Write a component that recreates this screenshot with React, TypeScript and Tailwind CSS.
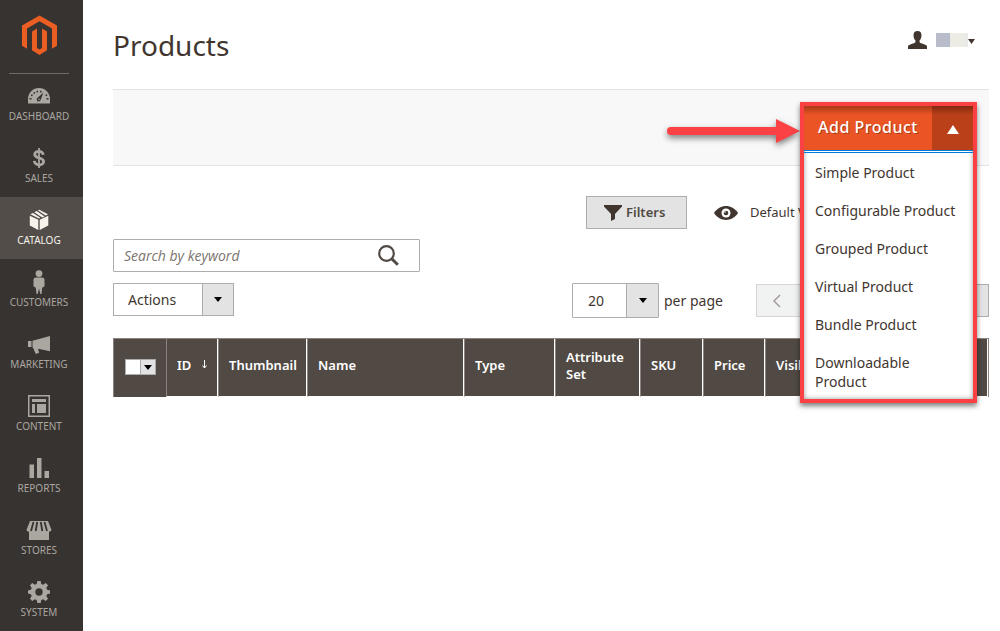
import type { ReactNode } from 'react';

type NavItem = { label: string; icon: ReactNode; active?: boolean };

const navItems: NavItem[] = [
  {
    label: 'DASHBOARD',
    icon: (
      <svg width="24" height="24" viewBox="0 0 24 24" fill="currentColor">
        <path d="M1 19.500V15a11 11 0 0 1 22 0v4.500z" />
        <g fill="#373330">
          <path d="M16.500 8.500 13.600 16a2 2 0 1 1-3.300-2z" />
          <rect x="2.500" y="14" width="2" height="1.500" />
          <rect x="4" y="10.500" width="1.600" height="1.600" />
          <rect x="6.500" y="8.200" width="1.600" height="1.600" />
          <rect x="9.500" y="6.800" width="1.600" height="1.600" />
          <rect x="13" y="6.800" width="1.600" height="1.600" />
          <rect x="18.600" y="10.500" width="1.600" height="1.600" />
          <rect x="19.500" y="14" width="2" height="1.500" />
        </g>
        <circle cx="12" cy="15.200" r="0.800" />
      </svg>
    ),
  },
  {
    label: 'SALES',
    icon: (
      <svg width="24" height="24" viewBox="0 0 24 24" fill="none" stroke="currentColor" strokeWidth="2.800">
        <path d="M16.300 8.800C15.800 6.600 14.200 5.300 12 5.300c-2.400 0-4.300 1.300-4.300 3.300 0 4.500 8.900 2.300 8.900 6.800 0 2-2 3.400-4.500 3.400-2.700 0-4.400-1.400-4.800-3.900" />
        <path strokeWidth="1.800" d="M12 2v20" />
      </svg>
    ),
  },
  {
    label: 'CATALOG',
    active: true,
    icon: (
      <svg width="24" height="24" viewBox="0 0 24 24" fill="currentColor">
        <path d="M2.800 7.800 11.300 11.800v10.200L2.800 17.600zM21.300 7.800 12.700 11.800v10.200l8.600-4.400z" />
        <path d="m7.300 4.200 2.300-1.100 5.200 3.500 2.800 1.900-2.300 1.100zM11 2.400l1.200-.6L21 6.300l-2.300 1.300zM3.300 6.300 6 4.900l7.400 4.900-1.400.8z" />
      </svg>
    ),
  },
  {
    label: 'CUSTOMERS',
    icon: (
      <svg width="24" height="26" viewBox="0 0 24 26" fill="currentColor">
        <circle cx="12" cy="4.600" r="3.400" />
        <path d="M9 8.500h6c1.800 0 2.500 1 2.500 2.800v6.200l-1.500.5-.8 1-.7 6h-1.200L12 19.500 10.700 25H9.500l-.7-6-.8-1-1.500-.5v-6.200C6.500 9.500 7.200 8.500 9 8.500z" />
      </svg>
    ),
  },
  {
    label: 'MARKETING',
    icon: (
      <svg width="24" height="24" viewBox="0 0 24 24" fill="currentColor">
        <path d="M1 9h3.500v6H1zM5.500 8.700 23 4v15.300L11 16.800l1.100 4-3.300 1.200-2.600-6-.7-.5z" />
      </svg>
    ),
  },
  {
    label: 'CONTENT',
    icon: (
      <svg width="24" height="24" viewBox="0 0 24 24" fill="currentColor">
        <path fillRule="evenodd" d="M1 1h22v22H1zM2.500 2.500v19h19v-19z" />
        <path d="M5 5h14v3H5zM5 10h3v9H5zM10 10h9v9h-9z" />
      </svg>
    ),
  },
  {
    label: 'REPORTS',
    icon: (
      <svg width="24" height="24" viewBox="0 0 24 24" fill="currentColor">
        <path d="M2.500 8.500H7V22H2.500zM10 2h4.500v20H10zM17.500 15H22v7h-4.500z" />
      </svg>
    ),
  },
  {
    label: 'STORES',
    icon: (
      <svg width="26" height="24" viewBox="0 0 26 24" fill="currentColor">
        <path d="M4 3h18l3.500 9c-.4 1.200-1.300 1.700-2.500 1.700V22H3v-8.300c-1.200 0-2.100-.5-2.500-1.700z" />
        <path fill="none" stroke="#373330" strokeWidth="1.800" d="M7.500 4 5 13M11.200 4 9.700 13M14.800 4l1.500 9M18.500 4 21 13" />
      </svg>
    ),
  },
  {
    label: 'SYSTEM',
    icon: (
      <svg width="24" height="24" viewBox="0 0 24 24" fill="currentColor">
        <path
          fillRule="evenodd"
          d="M10.400 1h3.200l.7 3 1.800.8 2.700-1.700 2.200 2.200-1.700 2.700.8 1.800 2.900.6v3.200l-2.900.7-.8 1.800 1.700 2.700-2.200 2.200-2.700-1.700-1.800.8-.7 2.900h-3.200l-.7-2.900-1.800-.8L5.200 21 3 18.800l1.700-2.700-.8-1.800-2.900-.7v-3.200l2.900-.6.8-1.800L3 5.300l2.200-2.200 2.700 1.700 1.800-.8zM12 8.300a3.700 3.700 0 1 0 0 7.400 3.700 3.700 0 0 0 0-7.400z"
        />
      </svg>
    ),
  },
];

const productTypes = [
  'Simple Product',
  'Configurable Product',
  'Grouped Product',
  'Virtual Product',
  'Bundle Product',
  'Downloadable Product',
];

const columns = [
  { label: 'Thumbnail', width: 'w-[89px]' },
  { label: 'Name', width: 'w-[157px]' },
  { label: 'Type', width: 'w-[91px]' },
  { label: 'Attribute Set', width: 'w-[85px]' },
  { label: 'SKU', width: 'w-[63px]' },
  { label: 'Price', width: 'w-[62px]' },
  { label: 'Visibility', width: '' },
];

function Caret() {
  return (
    <svg width="8" height="5" viewBox="0 0 8 5" fill="#000" aria-hidden="true">
      <path d="M0 0h8L4 5z" />
    </svg>
  );
}

function Sidebar() {
  return (
    <aside className="flex w-[83px] shrink-0 flex-col bg-[#373330]">
      <a href="#home" aria-label="Magento" className="ml-[9px] flex h-[74px] w-[60px] justify-center border-b border-[#736963] pt-[15px]">
        <svg width="35" height="41" viewBox="0 0 35 40" fill="#eb5e23">
          <path d="M17.500 0 35 10.100v20.200l-5 2.900V13L17.500 5.800 5 13v20.200l-5-2.900V10.100z" />
          <path d="m15 13-5 2.900v18.800l7.500 4.800 7.500-4.800V15.900L20 13v19.500l-2.500 1.400-2.500-1.400z" />
        </svg>
      </a>
      <nav aria-label="Main" className="-mt-px">
        {navItems.map(({ label, icon, active }) => (
          <a
            key={label}
            href={`#${label.toLowerCase()}`}
            className={
              'flex h-[62px] flex-col items-center pr-[5px] text-[10px] leading-[14px] ' +
              (active ? 'bg-[#524d49] text-[#f7f3eb]' : 'text-[#aaa6a0]')
            }
          >
            <span className="mt-[9px] flex h-[27px] items-center justify-center">
              <span className="flex h-6 items-center">{icon}</span>
            </span>
            {label}
          </a>
        ))}
      </nav>
    </aside>
  );
}

function AddProductMenu() {
  return (
    <div className="absolute top-3 right-3 z-10 w-[177px] border-4 border-[#fc4145] bg-white shadow-[0_3px_5px_rgba(0,0,0,0.5),inset_0_0_5px_rgba(0,0,0,0.4)]">
      <div className="flex h-[47px] border-b-[3px] border-double border-[#007bdb]">
        <button type="button" className="flex-1 bg-linear-to-b from-[#a93c18] via-[#eb5424] via-20% to-[#eb5424] pb-[2px] text-[16px] font-medium tracking-[0.5px] whitespace-nowrap text-white [text-shadow:1px_1px_0_rgba(0,0,0,0.3)]">
          Add Product
        </button>
        <button type="button" aria-label="Toggle product types" aria-expanded="true" className="flex w-[41px] items-center justify-center bg-linear-to-b from-[#84290f] via-[#ba4019] via-20% to-[#ba4019]">
          <svg width="12" height="9" viewBox="0 0 12 9" fill="#fff" className="mt-[2px]">
            <path d="M6 0 12 9H0z" />
          </svg>
        </button>
      </div>
      <ul className="flex flex-col gap-[19px] px-[11px] pt-[10px] pb-[8px] text-[14px] leading-[19px] text-[#41362f]">
        {productTypes.map((type) => (
          <li key={type}>
            <a href="#new" className="block">{type}</a>
          </li>
        ))}
      </ul>
    </div>
  );
}

function Toolbar() {
  return (
    <div className="relative h-[77px] border-y border-[#e3e3e3] bg-[#f8f8f8]">
      <svg width="142" height="40" viewBox="0 0 142 40" className="absolute top-[22px] right-[185px] z-10" aria-hidden="true">
        <g fill="#fc4145" className="drop-shadow-[0_3px_3px_rgba(0,0,0,0.5)]">
          <rect x="5" y="15" width="114" height="8" rx="4" />
          <path d="M114 7 138 19 114 31z" />
        </g>
      </svg>
      <AddProductMenu />
    </div>
  );
}

function ProductGrid() {
  return (
    <table className="w-full table-fixed border-separate border-spacing-0 border-t border-r border-[#8a837f] text-left text-[13px] leading-[17px] text-white">
      <thead>
        <tr className="h-[58px]">
          <th className="w-[53px] border-l border-[#8a837f] bg-[#514943] pb-[2px] pl-[11px]">
            <div className="flex h-4 w-[31px] border border-[#adadad] bg-white">
              <input type="checkbox" aria-label="Select all" className="w-[14px] appearance-none bg-white" />
              <button type="button" aria-label="Selection options" className="flex flex-1 items-center justify-center border-l border-[#adadad] bg-[#e3e3e3]">
                <Caret />
              </button>
            </div>
          </th>
          <th className="w-[52px] border-r border-b border-l border-r-white border-b-white border-l-[#8a837f] bg-[#514943] pb-[4px] pl-[10px] font-semibold">
            <span className="flex justify-between pr-[9px]">
              ID
              <svg width="7" height="10" viewBox="0 0 7 10" fill="none" stroke="#fff" className="mt-[3px]" aria-label="descending">
                <path d="M3.500 0v8M1.500 5.500l2 2.500 2-2.500" />
              </svg>
            </span>
          </th>
          {columns.map(({ label, width }) => (
            <th key={label} className={`${width} border-r border-b border-l border-r-white border-b-white border-l-[#8a837f] bg-[#514943] pb-[4px] pl-[10px] font-semibold`}>
              {label}
            </th>
          ))}
        </tr>
      </thead>
    </table>
  );
}

export default function App() {
  return (
    <div className="flex min-h-screen bg-white font-['Noto_Sans','Open_Sans',sans-serif] text-[14px] text-[#41362f]">
      <Sidebar />
      <main className="min-w-0 flex-1 pr-[11px] pl-[30px]">
        <header className="flex h-[89px] items-start justify-between pr-[14px]">
          <h1 className="pt-[25px] text-[28px] leading-[40px]">Products</h1>
          <button type="button" aria-label="Account" className="mt-[31px] flex h-[18px] items-center">
            <svg width="19" height="18" viewBox="0 0 19 18" fill="#41362f" className="mr-[9px]">
              <path d="M9.500 0c2.700 0 4 1.600 4 4.200 0 2.300-.7 4-1.900 5.100v1.900c.8 1.300 6.900 2 7.400 3.800V18H0v-3c.5-1.800 6.600-2.500 7.400-3.800V9.300C6.200 8.200 5.500 6.500 5.500 4.200 5.500 1.600 6.800 0 9.500 0z" />
            </svg>
            <span className="h-[14px] w-[14px] bg-[#b8bccb]" />
            <span className="h-[14px] w-[14px] bg-[#ecece4]" />
            <span className="h-[14px] w-1 bg-[#e9e9e9]" />
            <svg width="7" height="5" viewBox="0 0 7 5" fill="#41362f" className="mt-[2px]">
              <path d="M0 0h7L3.500 5z" />
            </svg>
          </button>
        </header>
        <Toolbar />
        <div className="mt-[30px] flex h-[33px] items-center pl-[473px]">
          <button type="button" className="flex h-[33px] w-[101px] shrink-0 items-center border border-[#adadad] bg-[#e3e3e3] pl-[17px] text-[13px] font-semibold text-[#514943]">
            <svg width="18" height="16" viewBox="0 0 18 16" fill="#41362f" className="mr-1">
              <path d="M0 0h18v1.500L11 9v5l-4 2V9L0 1.500z" />
            </svg>
            Filters
          </button>
          <button type="button" className="ml-[27px] flex shrink-0 items-center text-[13px]">
            <svg width="24" height="14" viewBox="0 0 24 14" className="mr-3">
              <path fill="#41362f" d="M0 7C6-2.300 18-2.300 24 7 18 16.300 6 16.300 0 7z" />
              <circle cx="12" cy="7" r="4.500" fill="#fff" />
              <circle cx="12" cy="7" r="2.300" fill="#41362f" />
              <circle cx="11" cy="6" r="0.800" fill="#fff" />
            </svg>
            Default View
          </button>
        </div>
        <div className="mt-[10px] flex h-[33px] w-[307px] items-center rounded-[1px] border border-[#adadad] pr-[20px] pl-[10px]">
          <input aria-label="Search by keyword" placeholder="Search by keyword" className="min-w-0 flex-1 font-['Open_Sans','Noto_Sans',sans-serif] text-[14px] italic outline-none placeholder:text-[#7b746f]" />
          <button type="button" aria-label="Search">
            <svg width="21" height="21" viewBox="0 0 21 21" fill="none" stroke="#514943">
              <circle cx="8.500" cy="8.500" r="7.300" strokeWidth="2.200" />
              <path strokeWidth="3" d="m13.500 13.500 6.300 6.300" />
            </svg>
          </button>
        </div>
        <div className="mt-[11px] flex items-start">
          <button type="button" className="flex h-[33px] w-[121px] shrink-0 border border-[#adadad]">
            <span className="flex h-full flex-1 items-center pl-[14px]">Actions</span>
            <span className="flex h-full w-[31px] items-center justify-center border-l border-[#adadad] bg-[#e3e3e3]">
              <Caret />
            </span>
          </button>
          <div className="ml-[338px] flex h-[35px] min-w-0 flex-1 items-center">
            <label className="flex shrink-0 items-center">
              <span className="relative flex h-[35px] w-[87px] items-center rounded-[1px] border border-[#adadad]">
                <select className="h-full flex-1 appearance-none pl-[15px] outline-none" defaultValue="20">
                  <option>20</option>
                  <option>50</option>
                </select>
                <span className="pointer-events-none flex h-full w-8 items-center justify-center border-l border-[#adadad] bg-[#e3e3e3]">
                  <Caret />
                </span>
              </span>
              <span className="ml-[5px]">per page</span>
            </label>
            <div className="ml-[33px] flex h-[33px] flex-1 justify-between">
              <button type="button" aria-label="Previous page" disabled className="w-[46px] border border-[#d6d6d6] bg-[#f1f2f2] pl-4">
                <svg width="8" height="14" viewBox="0 0 8 14" fill="none" stroke="#a39e9a" strokeWidth="1.500">
                  <path d="M7 1 1 7l6 6" />
                </svg>
              </button>
              <button type="button" aria-label="Next page" className="w-[46px] border border-[#adadad] bg-[#e3e3e3]" />
            </div>
          </div>
        </div>
        <div className="mt-5">
          <ProductGrid />
        </div>
      </main>
    </div>
  );
}
